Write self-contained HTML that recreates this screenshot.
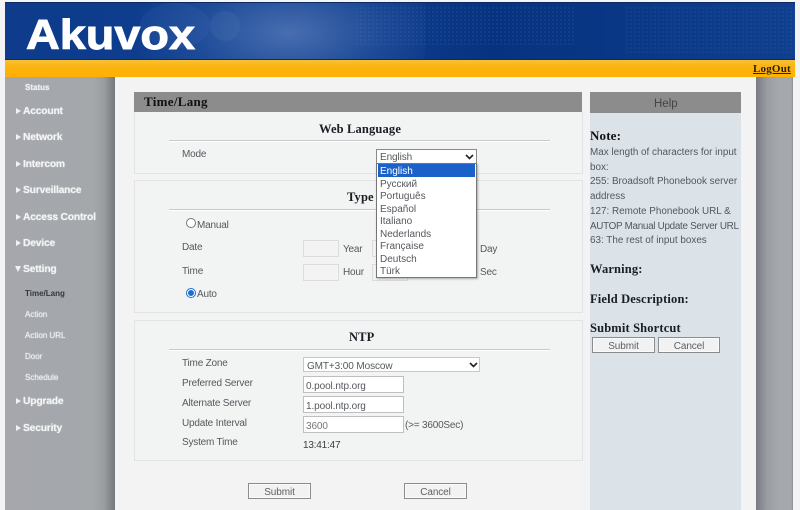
<!DOCTYPE html>
<html><head><meta charset="utf-8"><style>
html,body{margin:0;padding:0;width:800px;height:510px;overflow:hidden;background:#f3f3f4}
body{position:relative;font-family:"Liberation Sans",sans-serif;font-size:10px;color:#444}
div,span.a{position:absolute;box-sizing:border-box}
.t{white-space:nowrap;line-height:12px;font-size:10px;letter-spacing:-.2px;color:#55585d;margin-top:1px}
.m{white-space:nowrap;color:#f4f5f6;font-weight:bold;font-size:10.3px;letter-spacing:-.2px;line-height:12px;text-shadow:0 0 1px #e8e8e8;margin-top:1px}
.s{white-space:nowrap;color:#eceeef;font-size:8px;line-height:10px;margin-top:1px;text-shadow:0 0 1px #eee}
.h{white-space:nowrap;font-family:"Liberation Serif",serif;font-weight:bold;font-size:12.5px;line-height:14px;color:#1a1d24;letter-spacing:.15px}
.box{border:1px solid #e2e3e4;background:#f2f3f3}
.hr{height:1px;background:#c6c8ca;border-bottom:0;box-shadow:0 1px 0 #fff}
.in{background:#fff;border:1px solid #bcbcbc;color:#55585d;font-size:10px;letter-spacing:-.1px;padding-left:2px;white-space:nowrap}
.em{background:#f3f3f3;border:1px solid #dcdcdc}
.btn{background:#f2f2f2;border:1px solid #8c8c8c;box-shadow:inset 0 0 0 1px #fafafa;text-align:center;color:#5c5f63;font-size:10px;letter-spacing:-.1px;line-height:17px}
.o{left:1px;width:97px;height:12.5px;line-height:16.5px;padding-left:2px;font-size:10px;color:#55585d;white-space:nowrap}
.arr{width:0;height:0;border-left:5px solid #f0f1f2;border-top:3.5px solid transparent;border-bottom:3.5px solid transparent;margin-top:0}
</style></head><body>
<div style="left:0;top:0;width:800px;height:2px;background:#f5f5f5"></div>
<!-- banner -->
<div style="left:5px;top:2px;width:790px;height:58px;background:linear-gradient(90deg,#0e3b8c 0,#0f3f8f 30%,#0c3a8a 50%,#07327f 62%,#0a3886 80%,#0f3f8e 100%);border-top:1px solid #0a2a66;border-bottom:1px solid #0a2a6e;overflow:hidden">
<div style="left:120px;top:-50px;width:300px;height:160px;background:radial-gradient(ellipse at 55% 50%,rgba(120,150,205,.55),rgba(90,125,190,.22) 40%,rgba(60,100,170,0) 68%)"></div>
<div style="left:135px;top:0;width:70px;height:45px;border-radius:50%;background:rgba(130,160,210,.07)"></div>
<div style="left:205px;top:8px;width:30px;height:30px;border-radius:50%;background:rgba(130,160,210,.1)"></div>
<div style="left:350px;top:3px;width:220px;height:40px;background-image:radial-gradient(rgba(130,165,215,.2) .6px,transparent .9px);background-size:4px 4px"></div>
<div style="left:620px;top:3px;width:170px;height:48px;background-image:radial-gradient(rgba(130,165,215,.16) .6px,transparent .9px);background-size:4px 4px"></div>
</div>
<svg style="position:absolute;left:0;top:0" width="300" height="60"><text x="26" y="49" textLength="169" lengthAdjust="spacingAndGlyphs" font-family="Liberation Sans" font-weight="bold" font-size="42" fill="#fff" stroke="#fff" stroke-width=".9">Akuvox</text></svg>
<!-- orange -->
<div style="left:5px;top:60px;width:790px;height:17px;background:linear-gradient(180deg,#f6c136 0,#fbb414 35%,#ffb000 100%)"></div>
<div class="t" style="left:753px;top:62px;font-family:'Liberation Serif',serif;font-weight:bold;font-size:11px;color:#2a2208;text-decoration:underline;letter-spacing:.2px">LogOut</div>
<!-- side -->
<div style="left:5px;top:77px;width:110px;height:433px;background:linear-gradient(90deg,#a5a7ad 0,#a4a8ab 80%,#9a9ea1 90%,#74787c 100%)"></div>
<div style="left:756px;top:77px;width:37px;height:433px;background:linear-gradient(90deg,#777a80 0,#9a9da2 30%,#a5a8ac 60%,#a5a8ac 95%,#8c8e92 100%)"></div>
<div class="s" style="left:25px;top:82px;font-weight:bold">Status</div>
<div class="arr" style="left:16px;top:108px"></div><div class="m" style="left:23px;top:105px">Account</div>
<div class="arr" style="left:16px;top:134px"></div><div class="m" style="left:23px;top:131px">Network</div>
<div class="arr" style="left:16px;top:161px"></div><div class="m" style="left:23px;top:158px">Intercom</div>
<div class="arr" style="left:16px;top:187px"></div><div class="m" style="left:23px;top:184px">Surveillance</div>
<div class="arr" style="left:16px;top:214px"></div><div class="m" style="left:23px;top:211px">Access Control</div>
<div class="arr" style="left:16px;top:240px"></div><div class="m" style="left:23px;top:237px">Device</div>
<div style="left:15px;top:266px;width:0;height:0;border-top:6px solid #f0f1f2;border-left:3.5px solid transparent;border-right:3.5px solid transparent"></div><div class="m" style="left:23px;top:263px">Setting</div>
<div class="s" style="left:25px;top:288px;color:#33363c;font-weight:bold;text-shadow:none">Time/Lang</div>
<div class="s" style="left:25px;top:309px">Action</div>
<div class="s" style="left:25px;top:330px">Action URL</div>
<div class="s" style="left:25px;top:351px">Door</div>
<div class="s" style="left:25px;top:372px">Schedule</div>
<div class="arr" style="left:16px;top:398px"></div><div class="m" style="left:23px;top:395px">Upgrade</div>
<div class="arr" style="left:16px;top:425px"></div><div class="m" style="left:23px;top:422px">Security</div>
<!-- title -->
<div style="left:134px;top:92px;width:448px;height:20px;background:#8c8c8c"></div>
<div class="h" style="left:144px;top:95px;font-size:13px;color:#111;letter-spacing:.3px">Time/Lang</div>
<div style="left:590px;top:92px;width:151px;height:21px;background:#8c8c8c"></div>
<div class="t" style="left:654px;top:97px;font-size:11.5px;color:#444;letter-spacing:0">Help</div>
<div style="left:590px;top:113px;width:151px;height:397px;background:#dce3e8"></div>
<!-- web language -->
<div class="box" style="left:134px;top:112px;width:449px;height:62px;border-top:0"></div>
<div class="h" style="left:319px;top:122px">Web Language</div>
<div class="hr" style="left:169px;top:140px;width:381px"></div>
<div class="t" style="left:182px;top:148px">Mode</div>
<!-- type -->
<div class="box" style="left:134px;top:180px;width:449px;height:133px"></div>
<div class="h" style="left:347px;top:190px">Type</div>
<div class="hr" style="left:169px;top:209px;width:381px"></div>
<div style="left:186px;top:218px;width:10px;height:10px;border-radius:50%;background:#fff;border:1px solid #777"></div>
<div class="t" style="left:197px;top:219px">Manual</div>
<div class="t" style="left:182px;top:241px">Date</div>
<div class="em" style="left:303px;top:240px;width:36px;height:17px"></div>
<div class="t" style="left:343px;top:243px">Year</div>
<div class="em" style="left:372px;top:240px;width:36px;height:17px"></div>
<div class="t" style="left:480px;top:243px">Day</div>
<div class="t" style="left:182px;top:265px">Time</div>
<div class="em" style="left:303px;top:264px;width:36px;height:17px"></div>
<div class="t" style="left:343px;top:266px">Hour</div>
<div class="em" style="left:372px;top:264px;width:36px;height:17px"></div>
<div class="t" style="left:480px;top:266px">Sec</div>
<div style="left:186px;top:288px;width:10px;height:10px;border-radius:50%;background:#fff;border:1px solid #1a6fd0"></div>
<div style="left:188px;top:290px;width:6px;height:6px;border-radius:50%;background:#1a6fd0"></div>
<div class="t" style="left:197px;top:288px">Auto</div>
<!-- ntp -->
<div class="box" style="left:134px;top:320px;width:449px;height:141px"></div>
<div class="h" style="left:349px;top:330px">NTP</div>
<div class="hr" style="left:169px;top:349px;width:381px"></div>
<div class="t" style="left:182px;top:357px">Time Zone</div>
<div class="t" style="left:182px;top:377px">Preferred Server</div>
<div class="t" style="left:182px;top:397px">Alternate Server</div>
<div class="t" style="left:182px;top:417px">Update Interval</div>
<div class="t" style="left:182px;top:436px">System Time</div>
<div class="in" style="left:303px;top:357px;width:177px;height:15px;line-height:17px;border-color:#c8c8c8;padding-left:3px">GMT+3:00 Moscow</div>
<svg style="position:absolute;left:469px;top:362px" width="9" height="6"><path d="M1 1l3.500 3.500L8 1" fill="none" stroke="#222" stroke-width="1.600"/></svg>
<div class="in" style="left:303px;top:376px;width:101px;height:17px;line-height:19px;border-color:#bfbfbf">0.pool.ntp.org</div>
<div class="in" style="left:303px;top:396px;width:101px;height:17px;line-height:19px;border-color:#bfbfbf">1.pool.ntp.org</div>
<div class="in" style="left:303px;top:416px;width:101px;height:17px;line-height:19px;border-color:#bfbfbf;color:#777">3600</div>
<div class="t" style="left:405px;top:419px">(&gt;= 3600Sec)</div>
<div class="t" style="left:303px;top:439px;color:#3a3d42">13:41:47</div>
<div class="btn" style="left:248px;top:483px;width:63px;height:16px">Submit</div>
<div class="btn" style="left:404px;top:483px;width:63px;height:16px">Cancel</div>
<!-- help -->
<div class="h" style="left:590px;top:129px;color:#111;font-size:13px">Note:</div>
<div class="t" style="left:590px;top:145px;line-height:14.7px;width:150px;font-size:9.9px;color:#53575f;letter-spacing:0">Max length of characters for input<br>box:<br>255: Broadsoft Phonebook server<br>address<br>127: Remote Phonebook URL &amp;<br><span style="letter-spacing:-.3px">AUTOP Manual Update Server URL</span><br>63: The rest of input boxes</div>
<div class="h" style="left:590px;top:262px">Warning:</div>
<div class="h" style="left:590px;top:292px">Field Description:</div>
<div class="h" style="left:590px;top:321px">Submit Shortcut</div>
<div class="btn" style="left:592px;top:337px;width:63px;height:16px">Submit</div>
<div class="btn" style="left:658px;top:337px;width:62px;height:16px">Cancel</div>
<!-- dropdown -->
<div class="in" style="left:376px;top:149px;width:101px;height:15px;line-height:16px;border-color:#8a8a8a;padding-left:3px">English</div>
<svg style="position:absolute;left:465px;top:154px" width="9" height="6"><path d="M1 1l3.500 3.500L8 1" fill="none" stroke="#222" stroke-width="1.600"/></svg>
<div style="left:376px;top:163px;width:101px;height:115px;background:#fff;border:1px solid #767676;box-shadow:1px 1px 2px rgba(0,0,0,.3)">
<div class="o" style="top:0;background:#1a62c9;color:#fff;height:13px">English</div>
<div class="o" style="top:12.5px">Русский</div>
<div class="o" style="top:25px">Português</div>
<div class="o" style="top:37.5px">Español</div>
<div class="o" style="top:50px">Italiano</div>
<div class="o" style="top:62.5px">Nederlands</div>
<div class="o" style="top:75px">Française</div>
<div class="o" style="top:87.5px">Deutsch</div>
<div class="o" style="top:100px">Türk</div>
</div>
</body></html>
